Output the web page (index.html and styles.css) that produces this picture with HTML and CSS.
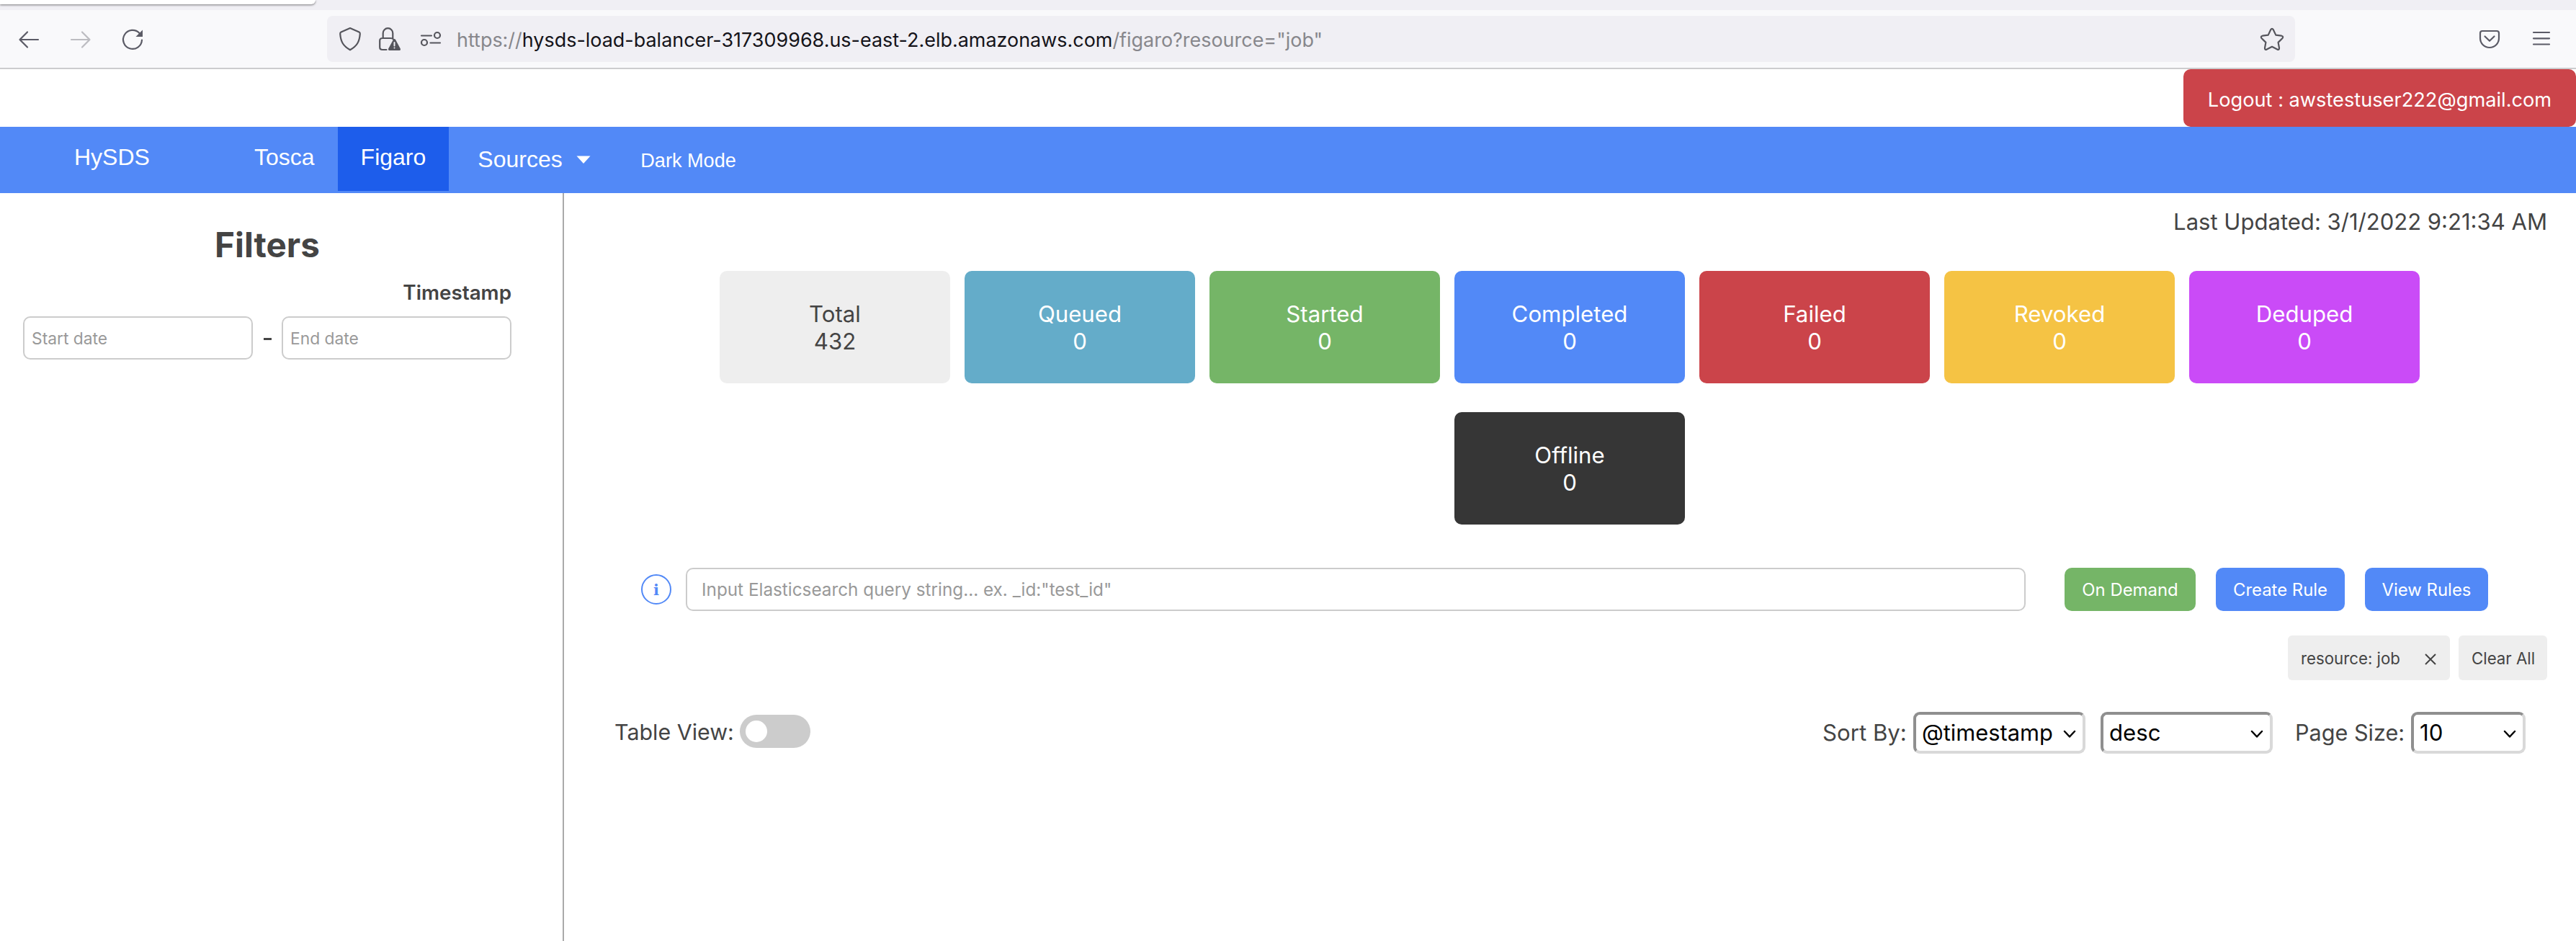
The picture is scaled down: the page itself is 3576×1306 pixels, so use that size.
FILE: index.html
```html
<!DOCTYPE html>
<html lang="en">
<head>
<meta charset="utf-8">
<title>Figaro</title>
<link rel="stylesheet" href="styles.css">
</head>
<body>
<div class="tabstrip"><div class="tab"></div></div>
<div class="toolbar">
  <div class="nav-buttons">
    <svg class="icon" width="32" height="32" viewBox="24 39 32 32"><path d="M53 55H27.5M38 44.5L27.5 55L38 65.5"/></svg>
    <svg class="icon icon-off" width="32" height="32" viewBox="96 39 32 32"><path d="M99 55H124.5M114 44.5L124.500 55L114 65.500"/></svg>
    <svg class="icon" width="32" height="32" viewBox="168 40 32 32"><path d="M193.500 47A13 13 0 1 0 197 56.500"/><path class="solid" d="M198 42.500V52H188.500Z"/></svg>
  </div>
  <div class="urlbar">
    <svg class="icon icon-url shield" width="32" height="36" viewBox="470 36 32 36"><path d="M486 39L498.500 44.500Q500 45.300 499.800 47C499 58 495.500 64 486 69.300C476.500 64 473 58 472.200 47Q472 45.300 473.500 44.500Z"/></svg>
    <svg class="icon icon-url lock" width="34" height="36" viewBox="524 36 34 36"><path d="M536.500 69H531Q527.200 69 527.200 65.500V56.500Q527.200 53 531 53H542Q545 53 546 54.500M531.700 53V46A6.800 6.800 0 0 1 545.300 46V54"/><path class="solid" d="M547.500 54Q548.500 54 549.200 55.200L555.800 67.500Q556.500 70 554.500 70H540.500Q538.500 70 539.200 67.500L545.800 55.200Q546.500 54 547.500 54Z"/><path class="bang" d="M547.500 59V63.500M547.500 66.400V66.600"/></svg>
    <svg class="icon icon-url perms" width="32" height="36" viewBox="582 36 32 36"><path d="M585 49.500H599M597.500 59.500H611"/><circle cx="607" cy="49" r="4"/><circle cx="589" cy="59" r="4"/></svg>
    <div class="url"><span>https://</span><span class="host">hysds-load-balancer-317309968.us-east-2.elb.amazonaws.com</span><span>/figaro?resource="job"</span></div>
    <svg class="icon icon-url star" width="36" height="36" viewBox="3136 36 36 36"><path d="M3152.200 41.200Q3154 38.500 3155.800 41.200L3159.300 48.600L3167.200 49.700Q3170.500 50.600 3168.300 53.300L3162.600 58.900L3164 66.500Q3164.200 69.500 3161.300 68.600L3154 64.800L3146.700 68.600Q3143.800 69.500 3144 66.500L3145.400 58.900L3139.700 53.300Q3137.500 50.600 3140.800 49.700L3148.700 48.600Z"/></svg>
  </div>
  <div class="menu-buttons">
    <svg class="icon" width="32" height="32" viewBox="3440 39 32 32"><path d="M3446 43H3466Q3469 43 3469 46V53A13 13 0 0 1 3443 53V46Q3443 43 3446 43ZM3449.500 50.500L3456 56.800L3462.500 50.500"/></svg>
    <svg class="icon" width="32" height="32" viewBox="3512 39 32 32"><path d="M3517 45H3539M3517 53.300H3539M3517 61.500H3539"/></svg>
  </div>
</div>

<div class="account"><button class="logout">Logout : awstestuser222@gmail.com</button></div>

<nav class="navbar">
  <a class="brand">HySDS</a>
  <a class="link">Tosca</a>
  <a class="link active">Figaro</a>
  <a class="sources">Sources<svg width="20" height="12" viewBox="0 0 20 12"><path d="M.5 .5H19.500L10 11Z" fill="#fff"/></svg></a>
  <a class="dark-mode">Dark Mode</a>
</nav>

<div class="page">
  <aside class="sidebar">
    <h1 class="filters">Filters</h1>
    <div class="field-label">Timestamp</div>
    <div class="dates">
      <input class="date" placeholder="Start date">
      <span class="dash"></span>
      <input class="date" placeholder="End date">
    </div>
  </aside>
  <main class="content">
    <div class="updated">Last Updated: 3/1/2022 9:21:34 AM</div>
    <div class="cards">
      <div class="card total"><span>Total</span><span>432</span></div>
      <div class="card queued"><span>Queued</span><span>0</span></div>
      <div class="card started"><span>Started</span><span>0</span></div>
      <div class="card completed"><span>Completed</span><span>0</span></div>
      <div class="card failed"><span>Failed</span><span>0</span></div>
      <div class="card revoked"><span>Revoked</span><span>0</span></div>
      <div class="card deduped"><span>Deduped</span><span>0</span></div>
      <div class="card offline"><span>Offline</span><span>0</span></div>
    </div>
    <div class="search">
      <span class="info">i</span>
      <input class="query" placeholder="Input Elasticsearch query string... ex. _id:&quot;test_id&quot;">
      <button class="btn on-demand">On Demand</button>
      <button class="btn create">Create Rule</button>
      <button class="btn view">View Rules</button>
    </div>
    <div class="chips">
      <div class="chip resource"><span>resource: job</span><svg width="18" height="18" viewBox="0 0 18 18"><path d="M2 2L16 16M16 2L2 16"/></svg></div>
      <div class="chip clear"><span>Clear All</span></div>
    </div>
    <div class="options">
      <span class="table-label">Table View:</span>
      <span class="toggle"><span class="knob"></span></span>
      <span class="sort-label">Sort By:</span>
      <div class="select by"><span>@timestamp</span><svg width="18" height="12" viewBox="0 0 18 12"><path d="M2 2L9 9.500L16 2"/></svg></div>
      <div class="select order"><span>desc</span><svg width="18" height="12" viewBox="0 0 18 12"><path d="M2 2L9 9.500L16 2"/></svg></div>
      <span class="size-label">Page Size:</span>
      <div class="select size"><span>10</span><svg width="18" height="12" viewBox="0 0 18 12"><path d="M2 2L9 9.500L16 2"/></svg></div>
    </div>
  </main>
</div>
</body>
</html>
```

FILE: styles.css
```css
* { box-sizing: border-box; }

body {
  margin: 0;
  height: 1306px;
  overflow: hidden;
  display: flex;
  flex-direction: column;
  background: #fff;
  color: #444;
  font-family: Inter, "Liberation Sans", sans-serif;
  font-size: 31.2px;
  line-height: 38px;
}

input, button { font-family: inherit; margin: 0; border: 0; }
svg { display: block; flex: none; }

/* browser chrome */
.tabstrip { flex: none; height: 14px; background: #f0eff4; }
.tab {
  width: 438px;
  height: 6px;
  background: #fff;
  border-radius: 0 0 7px 0;
  box-shadow: 0 1px 3px rgba(0, 0, 0, .5);
}
.toolbar {
  flex: none;
  display: flex;
  height: 82px;
  padding: 8px 32px 0 24px;
  background: #f9f9fb;
  border-bottom: 2px solid #ccccce;
}
.icon { fill: none; stroke: #5b5b66; stroke-width: 2.2; stroke-linecap: round; stroke-linejoin: round; }
.icon .solid { fill: #5b5b66; stroke: none; }
.icon-off { stroke: #bcbcc1; }
.icon-url { stroke: #55555c; }
.icon-url .solid { fill: #55555c; }
.icon .bang { stroke: #f0eff4; stroke-width: 2; }
.nav-buttons { display: flex; gap: 40px; width: 430px; padding-top: 17px; }
.urlbar {
  display: flex;
  width: 2732px;
  height: 64px;
  padding: 14px 14px 0 16px;
  border-radius: 8px;
  background: #f0eff4;
}
.lock { margin-left: 22px; }
.perms { margin-left: 24px; }
.url {
  flex: 1;
  margin-left: 20px;
  padding-top: 1px;
  font-size: 26.95px;
  line-height: 38px;
  color: #87878c;
  white-space: nowrap;
}
.host { color: #15141a; }
.menu-buttons { display: flex; gap: 40px; margin-left: auto; padding-top: 17px; }

/* application header */
.account { flex: none; display: flex; justify-content: flex-end; height: 80px; }
.logout {
  width: 545px;
  padding: 4px 0 0;
  border-radius: 10px;
  background: #cb444a;
  color: #fff;
  font-size: 27.2px;
}
.navbar {
  flex: none;
  display: flex;
  height: 92px;
  background: #5289f7;
  color: #fff;
  font-family: "Liberation Sans", Arial, sans-serif;
  font-size: 32px;
}
.navbar a { height: 89px; padding-top: 23px; white-space: nowrap; }
.brand { width: 321px; padding-left: 103px; }
.link { padding: 0 32px; }
.active { background: #1d5deb; }
.navbar .sources { display: flex; gap: 19px; width: 226px; margin-left: 40px; padding-top: 26px; }
.sources svg { margin-top: 14px; }
.navbar .dark-mode { padding-top: 28px; font-size: 27.1px; }

/* sidebar */
.page { flex: 1; display: flex; min-height: 0; }
.sidebar { width: 783px; padding: 44px 71px 0 32px; border-right: 2px solid #aaa; }
.filters { margin: 0; text-align: center; font-size: 47.6px; line-height: 56px; font-weight: 700; }
.field-label { margin-top: 21px; text-align: right; font-size: 27.8px; line-height: 34px; font-weight: 600; }
.dates { display: flex; align-items: center; justify-content: space-between; margin-top: 16px; }
.date, .query { height: 60px; border: 2px solid #ccc; border-radius: 10px; background: #fff; }
.date { width: 319px; padding: 1px 10px 0; font-size: 22.8px; }
.dash { width: 11px; height: 3px; margin-top: 3px; background: #444; }
input::placeholder { color: #999; opacity: 1; }

/* main column */
.content { flex: 1; display: flex; flex-direction: column; min-width: 0; }
.updated { margin-top: 21px; padding-right: 40px; text-align: right; font-size: 31.05px; }
.cards { display: flex; flex-wrap: wrap; justify-content: center; gap: 40px 20px; margin-top: 49px; padding: 0 181px 0 179px; }
.card {
  display: flex;
  flex-direction: column;
  align-items: center;
  width: 320px;
  height: 156px;
  padding: 41px 0 0 1px;
  border-radius: 10px;
  color: #fff;
}
.total { background: #eee; color: #444; }
.queued { background: #64acc9; }
.started { background: #75b567; }
.completed { background: #5289f7; }
.failed { background: #cb444a; }
.revoked { background: #f5c344; }
.deduped { background: #ca4bf7; }
.offline { background: #363636; }

.search { display: flex; align-items: center; margin: 60px 0 0 107px; }
.info {
  width: 42px;
  height: 42px;
  border: 2px solid #5289f7;
  border-radius: 50%;
  color: #5289f7;
  text-align: center;
  font: bold 21px/39px "DejaVu Serif", serif;
}
.query { width: 1860px; margin-left: 20px; padding: 0 20px; font-size: 24.3px; }
.btn { height: 60px; padding: 0; border-radius: 10px; background: #5289f7; color: #fff; font-size: 23.9px; }
.on-demand { width: 182px; margin-left: 54px; background: #75b567; }
.create { width: 179px; margin-left: 28px; }
.view { width: 171px; margin-left: 28px; }

.chips { display: flex; justify-content: flex-end; gap: 12px; margin-top: 34px; padding-right: 40px; }
.chip {
  display: flex;
  align-items: center;
  justify-content: space-between;
  height: 62px;
  padding: 1px 18px 0 18px;
  border-radius: 6px;
  background: #eee;
  font-size: 22.25px;
  white-space: nowrap;
}
.chip svg { fill: none; stroke: #444; stroke-width: 2; margin-top: 2px; }
.resource { width: 225px; }
.clear { width: 123px; }

.options { display: flex; align-items: center; height: 58px; margin-top: 44px; padding-left: 70px; white-space: nowrap; }
.table-label { width: 174px; margin-top: -3px; font-size: 30.4px; }
.toggle { width: 98px; height: 46px; margin-top: -4px; padding: 8px; border-radius: 23px; background: #ccc; }
.knob { display: block; width: 30px; height: 30px; border-radius: 50%; background: #fff; }
.sort-label { width: 126px; margin-left: 1405px; }
.size-label { width: 161px; margin-left: 31px; font-size: 30.6px; }
.select {
  display: flex;
  align-items: center;
  justify-content: space-between;
  height: 58px;
  padding: 0 9px 0 8px;
  border: 4px solid;
  border-color: #8f8f8f #d9d9d9 #d9d9d9 #8f8f8f;
  border-radius: 9px;
  color: #000;
}
.select svg { fill: none; stroke: #000; stroke-width: 2.4; stroke-linecap: round; stroke-linejoin: round; margin-top: 3px; }
.by { width: 239px; font-size: 30.8px; }
.order { width: 239px; margin-left: 21px; }
.size { width: 159px; }
```
